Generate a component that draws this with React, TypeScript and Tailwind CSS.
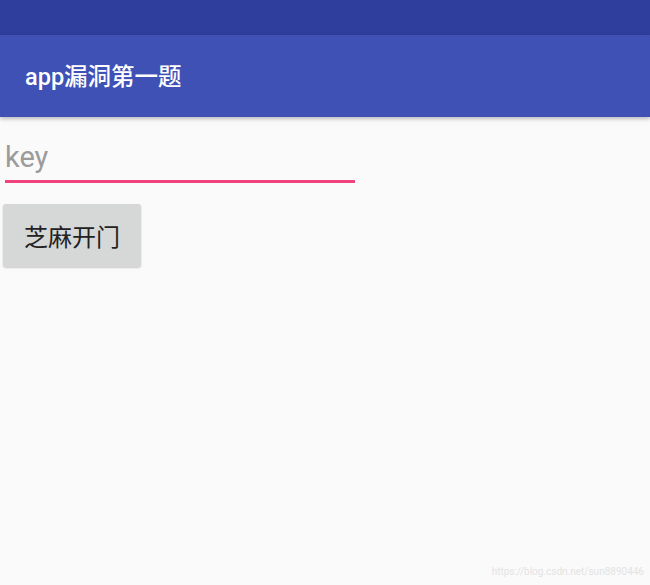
import React from 'react';

export default function App(): JSX.Element {
  return (
    <div className="relative w-[650px] h-[585px] bg-[#fafafa] overflow-hidden font-['Roboto','Noto_Sans_CJK_SC',sans-serif]">
      <div className="h-[35px] bg-[#2f3d9c]" />
      <div className="relative z-10 h-[82px] bg-[#3f51b5] flex items-center pl-[25px] pt-[3px] shadow-[0_2px_4px_rgba(0,0,0,0.25)]">
        <span className="text-white text-[23.5px] font-medium">app漏洞第一题</span>
      </div>

      <div className="pt-[22px] pl-[5px]">
        <div className="w-[350px] h-[44px] border-b-[3px] border-[#f0437e] flex items-center pb-[4px]">
          <span className="text-[#9b9b9b] text-[29px] leading-none">key</span>
        </div>
      </div>

      <div className="pl-[3px] pt-[21px]">
        <button className="w-[138px] h-[63px] rounded-[3px] bg-[#d6d7d7] shadow-[0_1px_2px_rgba(0,0,0,0.2)] text-[#222] text-[24px] flex items-center justify-center pt-[4px]">
          芝麻开门
        </button>
      </div>

      <div className="absolute right-[6px] bottom-[6px] text-[10px] text-[#e3e3e3]">
        https://blog.csdn.net/sun8890446
      </div>
    </div>
  );
}
